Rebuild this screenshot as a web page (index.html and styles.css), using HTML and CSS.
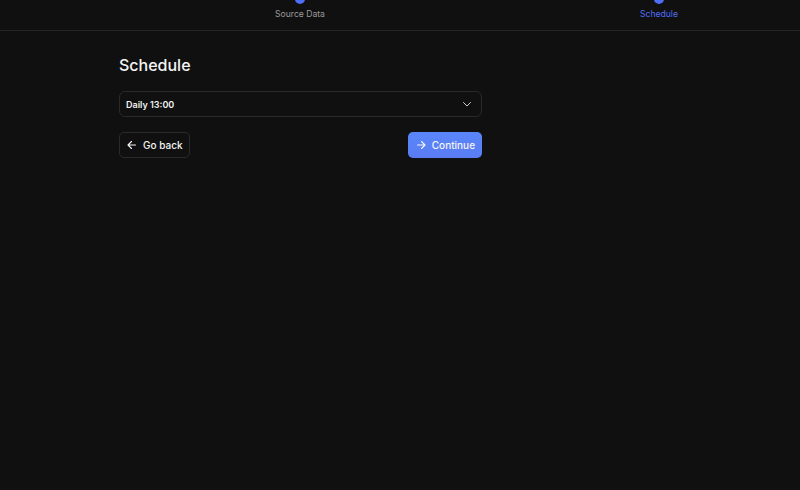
FILE: index.html
```html
<!DOCTYPE html>
<html lang="en">
<head>
    <meta charset="UTF-8">
    <meta name="viewport" content="width=device-width, initial-scale=1.0">
    <title>Schedule</title>
    <link rel="stylesheet" href="styles.css">
</head>
<body>
    <div class="stepper">
        <div class="step done">
            <span class="dot"></span>
            <span class="label">Source Data</span>
        </div>
        <div class="step active">
            <span class="dot"></span>
            <span class="label">Schedule</span>
        </div>
    </div>

    <div class="panel">
        <h2>Schedule</h2>
        <div class="select">
            <span>Daily 13:00</span>
            <svg width="12" height="12" viewBox="0 0 24 24" fill="none" stroke="#cfcfcf" stroke-width="2" stroke-linecap="round" stroke-linejoin="round"><path d="M5 9l7 7 7-7"/></svg>
        </div>
        <div class="actions">
            <button class="btn back">
                <svg width="12" height="12" viewBox="0 0 24 24" fill="none" stroke="currentColor" stroke-width="2.2" stroke-linecap="round" stroke-linejoin="round"><path d="M19 12H5M11 5l-7 7 7 7"/></svg>
                Go back
            </button>
            <button class="btn next">
                <svg width="12" height="12" viewBox="0 0 24 24" fill="none" stroke="currentColor" stroke-width="2.2" stroke-linecap="round" stroke-linejoin="round"><path d="M5 12h14M13 5l7 7-7 7"/></svg>
                Continue
            </button>
        </div>
    </div>
</body>
</html>
```

FILE: styles.css
```css
body {
    font-family: Inter, "Noto Sans", sans-serif;
    background-color: #101010;
    color: #f2f2f2;
    margin: 0;
}
.stepper {
    display: flex;
    height: 30px;
    padding-left: 240px;
    gap: 239px;
    border-bottom: 1px solid #262626;
}
.step {
    width: 120px;
    display: flex;
    flex-direction: column;
    align-items: center;
}
.dot {
    width: 10px;
    height: 10px;
    margin-top: -6px;
    border-radius: 50%;
    background-color: #4f6ef7;
}
.label {
    font-size: 8.6px;
    margin-top: 5px;
    color: #9b9b9b;
}
.step.active .label {
    color: #4f6ef7;
}
.panel {
    width: 363px;
    margin-left: 119px;
    padding-top: 24px;
}
h2 {
    font-size: 16px;
    font-weight: 500;
    margin: 0 0 16px;
    color: #f5f5f5;
}
.select {
    height: 24px;
    border: 1px solid #2a2a2a;
    border-radius: 6px;
    display: flex;
    align-items: center;
    justify-content: space-between;
    padding: 0 8px 0 6px;
    font-size: 9px;
    font-weight: 600;
}
.actions {
    display: flex;
    justify-content: space-between;
    margin-top: 15px;
}
.btn {
    height: 26px;
    display: flex;
    align-items: center;
    gap: 5px;
    font-family: inherit;
    font-size: 10px;
    font-weight: 500;
    color: #f5f5f5;
    border-radius: 5px;
    cursor: pointer;
}
.back {
    background: transparent;
    border: 1px solid #2a2a2a;
    padding: 0 6px;
}
.next {
    background: linear-gradient(180deg, #5a86fa, #5a7cf3);
    border: none;
    padding: 0 7px;
}
```
